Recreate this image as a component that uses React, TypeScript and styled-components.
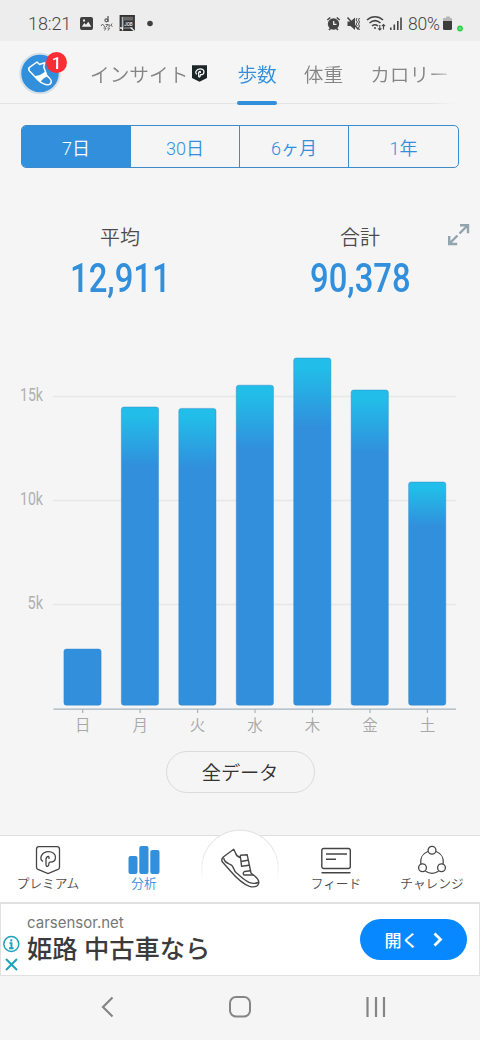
import React from "react";
import styled, { createGlobalStyle } from "styled-components";

const BLUE = "#318fdc";
const FONT = `Roboto, "Noto Sans CJK JP", sans-serif`;

const GlobalStyle = createGlobalStyle`
  * { box-sizing: border-box; }
  body { margin: 0; background: #f5f5f5; font-family: ${FONT}; }
  svg { display: block; flex: none; }
`;

const Screen = styled.div`
  width: 480px;
  height: 1040px;
  display: flex;
  flex-direction: column;
  overflow: hidden;
  background: #f5f5f5;
`;

const StatusBar = styled.header`
  height: 41px;
  flex: none;
  display: flex;
  align-items: center;
  justify-content: space-between;
  padding: 6px 16px 0 28px;
  background: #ededed;
  color: #454545;
`;

const StatusGroup = styled.div`
  display: flex;
  align-items: center;
`;

const Clock = styled.span`
  width: 43px;
  margin-right: 8px;
  font-size: 18px;
  font-weight: 350;
  line-height: 20px;
  letter-spacing: -0.1px;
`;

const BatteryText = styled.span`
  width: 32px;
  margin: 0 2px 0 6px;
  font-size: 17.5px;
  font-weight: 350;
  line-height: 20px;
  white-space: nowrap;
  letter-spacing: -0.2px;
`;

const TopBar = styled.div`
  height: 63px;
  flex: none;
  display: flex;
  align-items: stretch;
  padding-left: 19px;
  background: linear-gradient(#e3e3e3, #e3e3e3) bottom / 100% 1px no-repeat;
  mask-image: linear-gradient(90deg, #000 430px, transparent 454px);
  mask-clip: no-clip;
`;

const Avatar = styled.div`
  position: relative;
  width: 42px;
  height: 42px;
  margin: 11px 29px 0 0;
  flex: none;
`;

const Badge = styled.span`
  position: absolute;
  top: 0;
  right: -6px;
  width: 21px;
  height: 21px;
  border-radius: 50%;
  background: #fb2e35;
  color: #fff;
  font-size: 17px;
  font-weight: 500;
  line-height: 22px;
  text-align: center;
`;

const Tabs = styled.nav`
  flex: 1;
  display: flex;
  white-space: nowrap;
  height: 64px;
`;

const Tab = styled.div<{ $active?: boolean; $gap?: number }>`
  position: relative;
  flex: none;
  display: flex;
  align-items: center;
  gap: 4px;
  height: 64px;
  padding-top: 1px;
  margin-right: ${(p) => p.$gap ?? 27}px;
  color: ${(p) => (p.$active ? BLUE : "#858585")};
  font-size: 19.7px;
  font-weight: 350;
  &::after {
    content: "";
    display: ${(p) => (p.$active ? "block" : "none")};
    position: absolute;
    left: 0;
    right: 0;
    bottom: 0;
    height: 4px;
    border-radius: 2px;
    background: ${BLUE};
  }
`;

const Segments = styled.div`
  height: 43px;
  flex: none;
  display: grid;
  grid-template-columns: repeat(4, 1fr);
  margin: 21px 21px 0;
  border: 1.5px solid #3c8ccb;
  border-radius: 5px;
  overflow: hidden;
`;

const Segment = styled.div<{ $active?: boolean }>`
  display: flex;
  align-items: center;
  justify-content: center;
  font-size: 18px;
  font-weight: 350;
  color: ${(p) => (p.$active ? "#fff" : BLUE)};
  background: ${(p) => (p.$active ? BLUE : "transparent")};
  &:not(:last-child) { border-right: 1px solid #3c8ccb; }
`;

const Stats = styled.section`
  position: relative;
  flex: none;
  height: 172px;
  padding-top: 56px;
  display: grid;
  grid-template-columns: 1fr 1fr;
`;

const Stat = styled.div`
  display: flex;
  flex-direction: column;
  align-items: center;
`;

const StatLabel = styled.div`
  font-size: 20px;
  line-height: 29px;
  font-weight: 350;
  color: #4b4b4b;
`;

const StatValue = styled.div`
  font-size: 40px;
  font-weight: 460;
  line-height: 51px;
  color: ${BLUE};
  transform: scaleX(0.82);
`;

const ExpandButton = styled.div`
  position: absolute;
  right: 10px;
  top: 55px;
`;

const AllData = styled.div`
  width: 149px;
  height: 42px;
  flex: none;
  align-self: center;
  margin-top: 11px;
  display: flex;
  align-items: center;
  justify-content: center;
  border: 1px solid #dbdbdb;
  border-radius: 21px;
  font-size: 19.3px;
  letter-spacing: -0.2px;
  font-weight: 350;
  color: #333;
`;

const BottomNav = styled.nav`
  position: relative;
  height: 67px;
  flex: none;
  margin-top: auto;
  display: grid;
  grid-template-columns: repeat(5, 96px);
  background: #fff;
  border-top: 1px solid #dedede;
`;

const NavItem = styled.div<{ $active?: boolean }>`
  display: flex;
  flex-direction: column;
  align-items: center;
  padding-top: 9px;
  font-size: 12.7px;
  font-weight: 350;
  line-height: 18px;
  white-space: nowrap;
  color: ${(p) => (p.$active ? BLUE : "#4d4d4d")};
`;

const ShoeButton = styled.div`
  position: absolute;
  left: 200px;
  top: -8px;
`;

const Ad = styled.section`
  height: 74px;
  flex: none;
  display: flex;
  align-items: center;
  background: #fff;
  border: 1px solid #e1e1e4;
  border-top-width: 2px;
  padding-right: 12px;
`;

const AdMarks = styled.div`
  width: 21px;
  padding: 29px 0 0 1px;
  margin-right: 5px;
`;

const AdCopy = styled.div`
  flex: 1;
  padding-top: 3px;
`;

const AdDomain = styled.div`
  font-family: Inter, sans-serif;
  font-size: 15px;
  line-height: 18px;
  color: #777;
`;

const AdTitle = styled.div`
  font-size: 25.3px;
  line-height: 36px;
  font-weight: 500;
  color: #3b3b3b;
  white-space: nowrap;
`;

const AdButton = styled.div`
  width: 107px;
  height: 41px;
  display: flex;
  align-items: center;
  justify-content: center;
  gap: 14px;
  border-radius: 21px;
  background: #0788ff;
  color: #fff;
  font-size: 17px;
  font-weight: 500;
`;

const SystemNav = styled.footer`
  height: 64px;
  flex: none;
  display: flex;
  align-items: center;
  justify-content: space-between;
  padding: 0 94px 2px 100px;
`;

const PMark = () => (
  <path d="M9 16.300C7 15.600 6.300 13.200 7.300 11C8.700 8.200 11.500 6.700 14.500 6.700C18.500 6.700 21.500 9 21.500 12.200C21.500 15.500 19 17.200 16 17.200C15.300 17.200 15 17.600 15 18.300C15 22 12 22.300 12 19.500V14.500Q12 11.300 14.700 11.300Q15.200 12 15 14" />
);

const days = [
  { label: "日", top: 649 },
  { label: "月", top: 407 },
  { label: "火", top: 408.4 },
  { label: "水", top: 385.2 },
  { label: "木", top: 358 },
  { label: "金", top: 390 },
  { label: "土", top: 482 },
];

const ticks = [
  { label: "15k", y: 396.5, x: 20, w: 23 },
  { label: "10k", y: 500.5, x: 20, w: 23 },
  { label: "5k", y: 604.5, x: 27.5, w: 15.5 },
];

const Chart = () => (
  <svg width="480" height="400" viewBox="0 340 480 400" fontFamily={FONT}>
    <defs>
      <linearGradient id="bar" x1="0" y1="0" x2="0" y2="1">
        <stop offset="0.03" stopColor="#22bde8" />
        <stop offset="0.2" stopColor={BLUE} />
      </linearGradient>
    </defs>
    {ticks.map((t) => (
      <g key={t.label}>
        <path d={`M53 ${t.y}H456`} stroke="#e7e7e7" strokeWidth="1.3" />
        <text x={t.x} y={t.y + 4.8} fontSize="18" fill="#b0b0b0" textLength={t.w} lengthAdjust="spacingAndGlyphs">
          {t.label}
        </text>
      </g>
    ))}
    <path d="M53.5 709.2H456" stroke="#a5b4bf" strokeWidth="1.3" />
    {days.map((d, i) => {
      const x = 63.9 + i * 57.45;
      return (
        <g key={d.label}>
          <rect x={x} y={d.top} width="37.2" height={705.2 - d.top} rx="2.5" fill={i === 0 ? BLUE : "url(#bar)"} stroke="#2e86c8" strokeOpacity="0.55" strokeWidth="0.8" />
          <path d={`M${x + 18.8} 709v4`} stroke="#a5b4bf" strokeWidth="1.2" />
          <text x={x + 18.8} y="731" fontSize="15.5" fontWeight="350" fill="#a8a8a8" textAnchor="middle">
            {d.label}
          </text>
        </g>
      );
    })}
  </svg>
);

const StatusIcons = () => (
  <svg width="64" height="20" viewBox="79 14 64 20">
    <path fillRule="evenodd" fill="#3f3f3f" d="M82 17h9a2 2 0 0 1 2 2v9a2 2 0 0 1-2 2h-9a2 2 0 0 1-2-2v-9a2 2 0 0 1 2-2Zm-.2 9.800h9.500l-3-5-2.300 3-1.700-1.700ZM83 19.500v2h2v-2Z" />
    <g fill="none" stroke="#5a5a5a" strokeWidth="0.9">
      <path d="M108 16v6" strokeWidth="1.3" />
      <circle cx="106.400" cy="20.300" r="1.500" strokeWidth="1.200" />
      <path d="M101 26l1.500-2 2.500 3M105.500 24.500h2.500l-2 2.500M109 24v2.500l1.500-1M112 23.500l-1 2 1.500 1M103.500 28h2.500l-1.500 2.500M107.500 28h2l-1.500 2.500" />
    </g>
    <path d="M120.500 15.800h13.500v14.200h-13.500z" fill="#6a6a6a" stroke="#333" strokeWidth="1.800" />
    <path d="M122.500 17v12" stroke="#ccc" strokeWidth=".8" />
    <path d="M124 20.500h9v6.500h-9z" fill="#333" />
    <text x="128.500" y="25.800" fontFamily="Roboto" fontSize="4.500" fontWeight="700" fill="#ddd" textAnchor="middle">JOB</text>
    <path d="m130.500 27.500 4 3.500M120 28h2.500v2.500" stroke="#eee" strokeWidth="1.300" fill="none" />
  </svg>
);

const SignalIcons = () => (
  <svg width="76" height="20" viewBox="326 14 76 20" fill="none" stroke="#454545" strokeWidth="1.6">
    <circle cx="333.500" cy="24" r="5.700" fill="#454545" stroke="none" />
    <path d="m327.300 20 3-2.500M339.700 20l-3-2.500M329 30l2-2M338 30l-2-2" />
    <path d="M333.700 21v3.300h2.800" stroke="#ededed" strokeWidth="1.300" />
    <path d="M347.500 21.500h3l4.500-4v12.500l-4.500-4h-3z" fill="#454545" stroke="none" />
    <path d="m347.500 17.500 11 12" strokeWidth="1.500" />
    <path d="m357 18-1 2 1.500 2-1.500 2 1.500 2M359.500 18l-1 2 1 2-1 2 1 2-1 2 1 2" strokeWidth="1" />
    <path d="M367 20c4.800-4.300 11.200-4.300 16 0M369.500 23c3.600-3 7.500-3 11 0M372 26c2-1.700 4-1.700 6 0" />
    <circle cx="375" cy="28" r="1" fill="#454545" stroke="none" />
    <path d="M379.800 25v5m-1.600-1.600 1.600 1.600 1.600-1.600M383.500 29.500v-5m-1.600 1.600 1.600-1.600 1.600 1.600" strokeWidth="1.1" />
    <path d="M390.800 27.500V30M394.300 24.500V30M397.800 21V30M401 17.500V30" strokeWidth="1.6" />
  </svg>
);

const Battery = () => (
  <svg width="22" height="20" viewBox="442 14 22 20">
    <path d="M446 16.500h4v1.500h1.500l.5.500V22h-9v-3.500l.5-.5h2.500z" fill="#b6b6b6" />
    <path d="M443 21h9v7.500q0 1.500-1.500 1.500h-6q-1.500 0-1.500-1.500z" fill="#3d3d3d" />
    <circle cx="460" cy="28.500" r="2.900" fill="#2fd04d" />
    <circle cx="460" cy="28.500" r="1.200" fill="#6be67b" />
  </svg>
);

const AvatarIcon = () => (
  <svg width="42" height="42" viewBox="19 52 42 42">
    <circle cx="40" cy="73.500" r="19.700" fill={BLUE} stroke="#d6dfe8" strokeWidth="2" />
    <path d="M37 62 29.500 67.300Q28 69 29.500 71L38.500 80.500C42 83.500 45.500 85.200 48.500 84.700C51.800 84 52 80.800 50 78.800L46.800 75.500 45 70.500 43.700 67 44.700 62.700 41.500 63.700 39.500 64.500Z" fill="none" stroke="#fff" strokeWidth="1.500" strokeLinejoin="round" />
    <path d="M34.500 76.300 40 75 45.500 71.500 47.500 76.300 43.500 78.500 40 82Z" fill="#fff" />
  </svg>
);

const ShoeIcon = () => (
  <svg width="80" height="64" viewBox="200 828 80 64" fill="none">
    <defs>
      <linearGradient id="rim" x1="0" y1="829" x2="0" y2="884" gradientUnits="userSpaceOnUse">
        <stop offset="0.3" stopColor="#dedede" />
        <stop offset="1" stopColor="#fff" />
      </linearGradient>
    </defs>
    <path d="M205 884a38.300 38.300 0 1 1 70 0z" fill="#fff" />
    <path d="M205 884a38.300 38.300 0 1 1 70 0" stroke="url(#rim)" />
    <g stroke="#494949" strokeWidth="1.4" strokeLinejoin="round" strokeLinecap="round">
      <path d="M233.700 849.300 223.300 857Q220.700 859.500 222.500 862L230 870.500C236 877.500 242.500 884 249.500 886.300C254.500 887.800 258.500 886.300 258.800 882.500C259 878.500 254.500 876 251 873L247.200 854.800 240.500 855.200 240.200 857.500Q236.500 856.500 235.500 853Z" />
      <path d="M223.800 858.500Q224.500 862 229 863.800C235 865.500 232.500 870 236.500 873C241 876.500 244 880 249 882.300Q254 884.300 258.300 882.500M240.500 857.500 241.600 866.300 249 865.200M241 861.500 247.800 860.300M250.500 870.800 244.500 871.500Q242.500 872.800 243.800 875L253 875" />
    </g>
  </svg>
);

const App: React.FC = () => (
  <>
    <GlobalStyle />
    <Screen>
      <StatusBar>
        <StatusGroup>
          <Clock>18:21</Clock>
          <StatusIcons />
          <svg width="14" height="20" viewBox="143 14 14 20"><circle cx="150" cy="23.500" r="2.800" fill="#3f3f3f" /></svg>
        </StatusGroup>
        <StatusGroup>
          <SignalIcons />
          <BatteryText>80%</BatteryText>
          <Battery />
        </StatusGroup>
      </StatusBar>

      <TopBar>
        <Avatar>
          <AvatarIcon />
          <Badge>1</Badge>
        </Avatar>
        <Tabs>
          <Tab $gap={30}>
            インサイト
            <svg width="15" height="17" viewBox="0 0 27 30">
              <path d="M0 0h27v23L13.500 30 0 23z" fill="#1c2526" />
              <g fill="none" stroke="#fff" strokeWidth="2.200"><PMark /></g>
            </svg>
          </Tab>
          <Tab $active>歩数</Tab>
          <Tab>体重</Tab>
          <Tab $gap={0}>カロリー</Tab>
        </Tabs>
      </TopBar>

      <Segments>
        <Segment $active>7日</Segment>
        <Segment>30日</Segment>
        <Segment>6ヶ月</Segment>
        <Segment>1年</Segment>
      </Segments>

      <Stats>
        <Stat>
          <StatLabel>平均</StatLabel>
          <StatValue>12,911</StatValue>
        </Stat>
        <Stat>
          <StatLabel>合計</StatLabel>
          <StatValue>90,378</StatValue>
        </Stat>
        <ExpandButton>
          <svg width="23" height="23" viewBox="0 0 23 23" fill="none" stroke="#92a4ae" strokeWidth="2.4">
            <path d="M12.500 10.500 20.500 2.500M13 2.200h8v8M10.500 12.500l-8 8M2.200 13v8h8" />
          </svg>
        </ExpandButton>
      </Stats>

      <Chart />

      <AllData>全データ</AllData>

      <BottomNav>
        <NavItem>
          <svg width="28" height="30" viewBox="0 0 28 30" fill="none" stroke="#454545" strokeWidth="1.3">
            <path d="M5 1.700h18q2.500 0 2.500 2.500v18q0 1.500-1.500 2.200L14 28.500 4 24.400q-1.500-.7-1.500-2.200v-18Q2.500 1.700 5 1.700Z" />
            <PMark />
          </svg>
          プレミアム
        </NavItem>
        <NavItem $active>
          <svg width="32" height="30" viewBox="0 0 32 30" fill={BLUE}>
            <rect x=".5" y="11" width="9" height="18" rx="2" />
            <rect x="11.300" y="1" width="9.200" height="28" rx="2" />
            <rect x="22.300" y="5" width="9.200" height="24" rx="2" />
          </svg>
          分析
        </NavItem>
        <span />
        <NavItem>
          <svg width="30" height="30" viewBox="0 0 30 30" fill="none" stroke="#454545" strokeWidth="1.4">
            <rect x=".8" y="3.500" width="28.500" height="20" rx="2" />
            <path d="M5 9h21M5 14.300h10M.5 27.700h29" />
          </svg>
          フィード
        </NavItem>
        <NavItem>
          <svg width="30" height="30" viewBox="0 0 30 30" fill="none" stroke="#454545" strokeWidth="1.3">
            <path d="M11 6.500C5.500 8.500 3 13.500 4 19M19 6.500c5.500 2 8 7 7 12.500M8.500 26.300c4 2.500 9 2.500 13 0" />
            <circle cx="15" cy="5.300" r="3.900" />
            <circle cx="5.500" cy="22.700" r="3.900" />
            <circle cx="24.500" cy="22.700" r="3.900" />
          </svg>
          チャレンジ
        </NavItem>
        <ShoeButton><ShoeIcon /></ShoeButton>
      </BottomNav>

      <Ad>
        <AdMarks>
          <svg width="19" height="38" viewBox="0 0 19 38" fill="none" stroke="#1ba3b9" strokeWidth="1.5">
            <circle cx="9.300" cy="9" r="7.500" />
            <path d="M9.300 4.300v2.200M7.500 8.200h2v5M7 13.200h4.600" strokeWidth="1.9" />
            <path d="m4 24 11 11M15 24 4 35" strokeWidth="2" />
          </svg>
        </AdMarks>
        <AdCopy>
          <AdDomain>carsensor.net</AdDomain>
          <AdTitle>姫路 中古車なら</AdTitle>
        </AdCopy>
        <AdButton>
          開く
          <svg width="10" height="15" viewBox="0 0 10 15" fill="none" stroke="#fff" strokeWidth="2.8"><path d="m1.500 1.500 6 6-6 6" /></svg>
        </AdButton>
      </Ad>

      <SystemNav>
        <svg width="14" height="22" viewBox="0 0 14 22" fill="none" stroke="#858585" strokeWidth="2.2"><path d="M12.500 1.500 3 11l9.500 9.500" /></svg>
        <svg width="22" height="22" viewBox="0 0 22 22" fill="none" stroke="#858585" strokeWidth="2"><rect x="1" y="1" width="20" height="19.500" rx="6" /></svg>
        <svg width="20" height="22" viewBox="0 0 20 22" stroke="#858585" strokeWidth="2.2"><path d="M1.500 1v20M10 1v20M18 1v20" /></svg>
      </SystemNav>
    </Screen>
  </>
);

export default App;
